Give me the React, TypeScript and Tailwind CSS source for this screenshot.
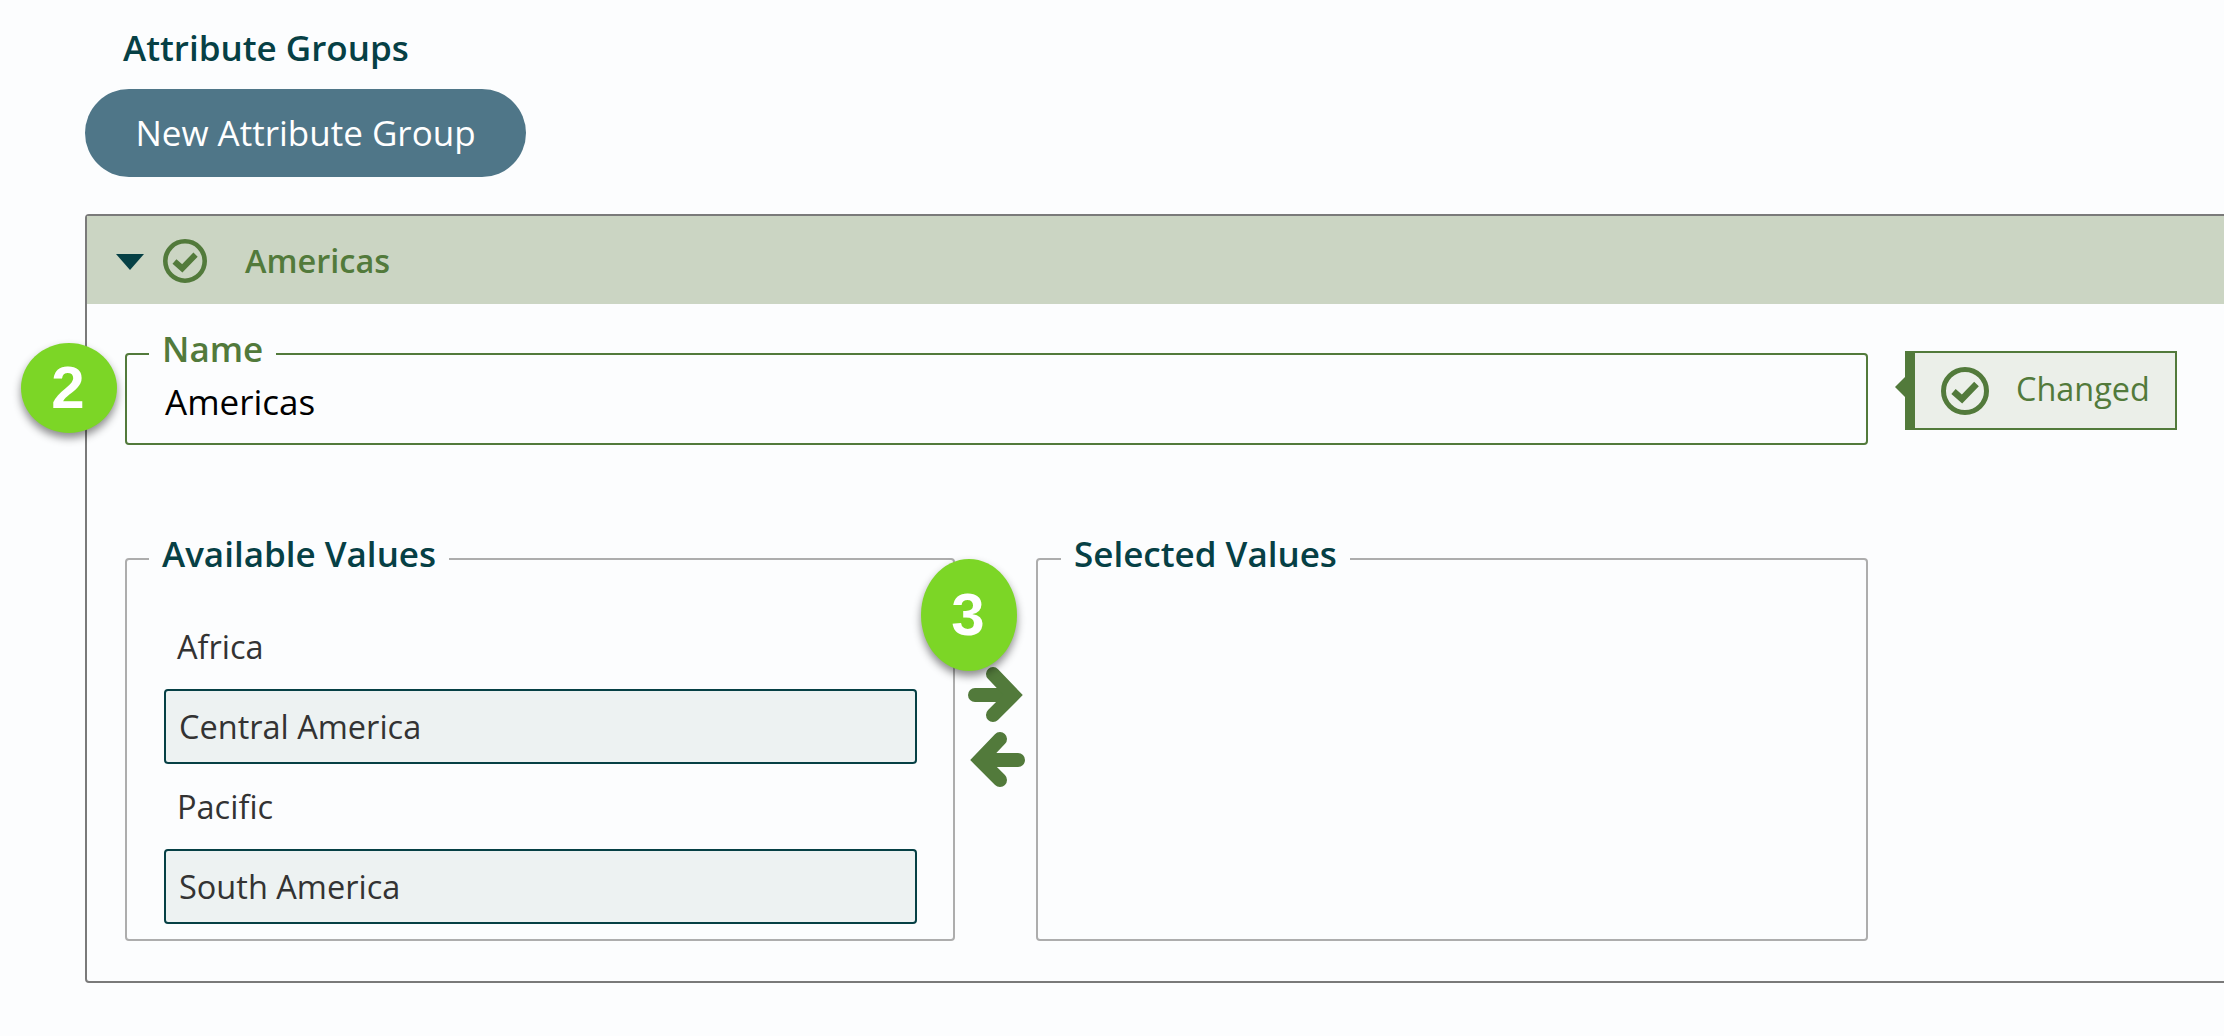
const font = { fontFamily: '"Open Sans", sans-serif' };

function CheckCircle({ className }: { className: string }) {
  return (
    <svg viewBox="0 0 48 48" className={className} fill="none" stroke="#527a3b">
      <circle cx="24" cy="24" r="21.5" strokeWidth="5" />
      <path d="M12.5 24.5 L21 32 L35.5 17" strokeWidth="6.5" />
    </svg>
  );
}

function Arrow({ flip }: { flip?: boolean }) {
  return (
    <svg viewBox="0 0 56 56" className={flip ? 'w-[56px] h-[56px] -scale-x-100 ml-[1px]' : 'w-[56px] h-[56px]'} fill="none" stroke="#527a3b" strokeWidth="14">
      <path d="M7 28 H42" strokeLinecap="round" />
      <path d="M25 7 L45 28 L25 48" strokeLinecap="round" strokeLinejoin="miter" />
    </svg>
  );
}

function Badge({ n, className }: { n: string; className: string }) {
  return (
    <div
      className={
        'absolute flex items-center justify-center w-[96px] pr-[2px] rounded-[50%] bg-[#7cd626] text-white font-bold text-[60px] shadow-[0_5px_8px_rgba(0,0,0,0.45)] ' +
        className
      }
      style={{ fontFamily: '"Liberation Sans", sans-serif' }}
    >
      {n}
    </div>
  );
}

const rows = [
  { label: 'Africa', selected: false },
  { label: 'Central America', selected: true },
  { label: 'Pacific', selected: false },
  { label: 'South America', selected: true },
];

export default function App() {
  return (
    <div className="relative h-[1036px] w-full overflow-hidden bg-[#fcfdfe] pl-[85px] pt-[24px]" style={font}>
      <h1 className="pl-[38px] text-[35px] leading-[48px] font-semibold text-[#064045]">Attribute Groups</h1>
      <button className="mt-[17px] h-[88px] w-[441px] rounded-[44px] bg-[#4f7688] text-[35px] text-white">
        New Attribute Group
      </button>

      <div className="mt-[37px] w-[2200px] rounded-[4px] border-2 border-[#7a7a7a] pb-[40px]">
        <div className="flex h-[88px] items-center bg-[#cbd5c3] pl-[29px]">
          <svg viewBox="0 0 28 16" className="mt-[3px] h-[16px] w-[28px]">
            <path d="M0 0 H28 L14 16 Z" fill="#064045" />
          </svg>
          <CheckCircle className="mt-[2px] ml-[19px] h-[44px] w-[44px]" />
          <span className="ml-[38px] pt-[2px] text-[32.5px] font-semibold text-[#527a3b]">Americas</span>
        </div>

        <div className="pl-[38px]">
          <div className="mt-[25px] flex items-start">
            <fieldset className="w-[1743px] rounded-[4px] border-2 border-[#527a3b] pb-[18px] pl-[38px]">
              <legend className="-ml-[16px] px-[13px] pb-[10px] text-[35px] leading-[40px] font-semibold text-[#527a3b]">Name</legend>
              <div className="text-[35px] leading-[46px] text-black">Americas</div>
            </fieldset>
            <div className="relative mt-[22px] ml-[37px] flex h-[79px] w-[272px] items-center border-2 border-l-[10px] border-[#527a3b] bg-[#ebefe9]">
              <div className="absolute -left-[20px] top-[24px] h-0 w-0 border-y-[10px] border-r-[10px] border-y-transparent border-r-[#527a3b]" />
              <CheckCircle className="ml-[26px] h-[48px] w-[48px]" />
              <span className="ml-[27px] -mt-[4px] text-[32.4px] text-[#527a3b]">Changed</span>
            </div>
          </div>

          <div className="mt-[89px] flex w-[1743px]">
            <fieldset className="w-[830px] rounded-[4px] border-2 border-[#adadad] pl-[37px] pr-[36px] pt-[25px] pb-[15px]">
              <legend className="-ml-[15px] px-[13px] pb-[10px] text-[35px] leading-[40px] font-semibold text-[#064045]">Available Values</legend>
              <div className="flex flex-col gap-[5px]">
                {rows.map((r) => (
                  <div
                    key={r.label}
                    className={
                      r.selected
                        ? 'flex h-[75px] items-center rounded-[4px] border-2 border-[#064045] bg-[#edf2f2] pt-[2px] pl-[13px] text-[32.5px] text-[#333333]'
                        : 'flex h-[75px] items-center rounded-[4px] border-2 border-transparent pt-[2px] pl-[11px] text-[32.5px] text-[#333333]'
                    }
                  >
                    {r.label}
                  </div>
                ))}
              </div>
            </fieldset>
            <div className="flex w-[81px] flex-col gap-[9px] pt-[133px] pl-[13px]">
              <Arrow />
              <Arrow flip />
            </div>
            <fieldset className="w-[832px] rounded-[4px] border-2 border-[#adadad]">
              <legend className="ml-[23px] px-[13px] pb-[10px] text-[35px] leading-[40px] font-semibold text-[#064045]">Selected Values</legend>
            </fieldset>
          </div>
        </div>
      </div>

      <Badge n="2" className="left-[21px] top-[343px] h-[90px]" />
      <Badge n="3" className="left-[921px] top-[559px] h-[112px]" />
    </div>
  );
}
